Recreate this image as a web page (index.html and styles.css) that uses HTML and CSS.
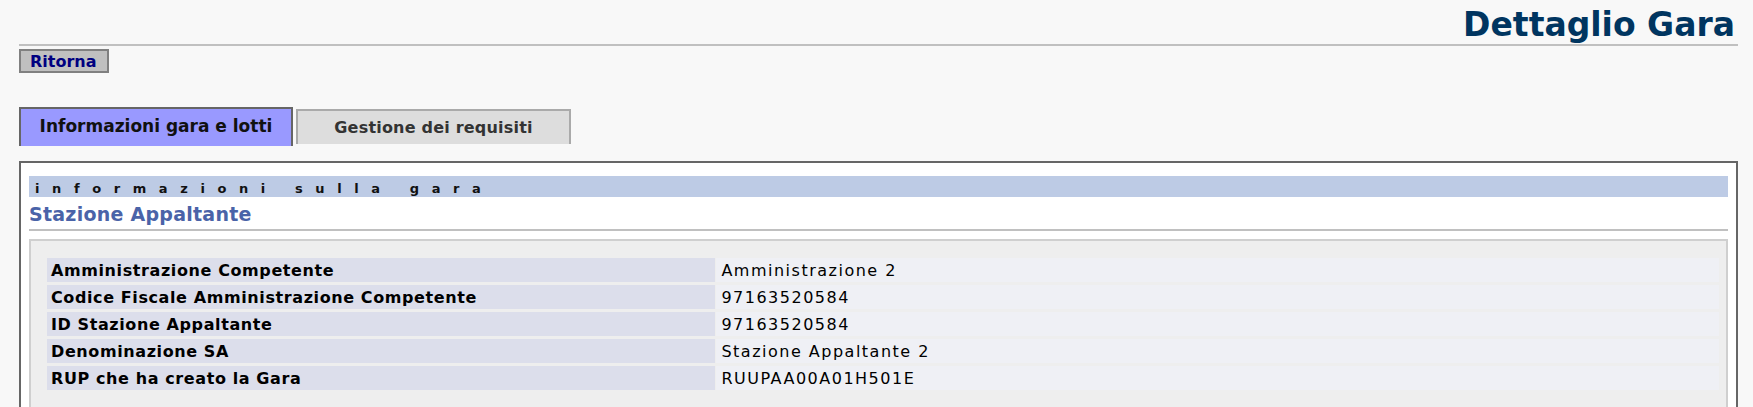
FILE: index.html
```html
<!DOCTYPE html>
<html lang="it">
<head>
<meta charset="utf-8">
<title>Dettaglio Gara</title>
<link rel="stylesheet" href="styles.css">
</head>
<body>
<div class="page">
  <header class="title-bar">
    <h1 class="title">Dettaglio Gara</h1>
  </header>
  <div class="actions">
    <button class="btn-back" type="button">Ritorna</button>
  </div>
  <nav class="tabs">
    <div class="tab tab-active">Informazioni gara e lotti</div>
    <div class="tab tab-idle">Gestione dei requisiti</div>
  </nav>
  <section class="panel">
    <div class="panel-head">informazioni sulla gara</div>
    <h2 class="section-title">Stazione Appaltante</h2>
    <div class="detail-box">
      <div class="detail-grid">
        <div class="cell label">Amministrazione Competente</div>
        <div class="cell value">Amministrazione 2</div>
        <div class="cell label">Codice Fiscale Amministrazione Competente</div>
        <div class="cell value">97163520584</div>
        <div class="cell label">ID Stazione Appaltante</div>
        <div class="cell value">97163520584</div>
        <div class="cell label">Denominazione SA</div>
        <div class="cell value">Stazione Appaltante 2</div>
        <div class="cell label">RUP che ha creato la Gara</div>
        <div class="cell value">RUUPAA00A01H501E</div>
      </div>
    </div>
  </section>
</div>
</body>
</html>
```

FILE: styles.css
```css
html, body {
  margin: 0;
  padding: 0;
  overflow: hidden;
  background: #f8f8f8;
}

body {
  font-family: "DejaVu Sans", Verdana, sans-serif;
  color: #000;
}

.page {
  padding: 0 15px 0 19px;
}

.title-bar {
  padding-top: 6px;
  border-bottom: 2px solid #c0c0c0;
  text-align: right;
}

.title {
  margin: 0;
  padding-right: 3px;
  font-size: 33px;
  line-height: 38px;
  font-weight: bold;
  color: #003560;
}

.actions {
  margin-top: 3px;
  display: flex;
}

.btn-back {
  margin: 0;
  display: block;
  box-sizing: border-box;
  height: 24px;
  padding: 2px 10px 0 9px;
  border: 2px solid #808080;
  border-radius: 0;
  background: #c0c0c0;
  color: #000080;
  font-family: "DejaVu Sans", Verdana, sans-serif;
  font-size: 16px;
  font-weight: bold;
  line-height: 18px;
  letter-spacing: 0;
}

.tabs {
  margin-top: 34px;
  display: flex;
  align-items: center;
  gap: 3px;
}

.tab {
  box-sizing: border-box;
  text-align: center;
  font-weight: bold;
  line-height: 20px;
}

.tab-active {
  width: 274px;
  padding: 7px 0 10px;
  border: 2px solid #666;
  border-bottom: 0;
  background: #9999ff;
  color: #111;
  font-size: 17px;
}

.tab-idle {
  width: 275px;
  padding: 7px 0 6px;
  border: 2px solid #aaa;
  border-bottom: 0;
  background: #dddddd;
  color: #333;
  font-size: 16px;
  letter-spacing: 0.2px;
}

.panel {
  margin-top: 15px;
  border: 2px solid #666;
  background: #fff;
  padding: 13px 8px 0;
}

.panel-head {
  height: 21px;
  box-sizing: border-box;
  padding: 4px 0 0 6px;
  background: #bdcbe5;
  font-size: 13px;
  font-weight: bold;
  line-height: 17px;
  letter-spacing: 12.6px;
  color: #111;
}

.section-title {
  margin: 6px 0 0;
  padding-bottom: 4px;
  border-bottom: 2px solid #c0c0c0;
  font-size: 19px;
  line-height: 22px;
  font-weight: bold;
  letter-spacing: 0.25px;
  color: #4a63a8;
}

.detail-box {
  margin-top: 8px;
  border: 2px solid #cfcfcf;
  background: #eeeeee;
  padding: 17px 7px 17px 16px;
}

.detail-grid {
  display: grid;
  grid-template-columns: 2fr 3fr;
  column-gap: 1px;
  row-gap: 3px;
}

.cell {
  height: 24px;
  box-sizing: border-box;
  padding-top: 1px;
  font-size: 16px;
  line-height: 23px;
  white-space: nowrap;
  overflow: hidden;
}

.label {
  padding-left: 4px;
  background: #dcdeeb;
  font-weight: bold;
  letter-spacing: 0.6px;
}

.value {
  padding-left: 5px;
  background: #eff0f5;
  letter-spacing: 1.5px;
}
```
